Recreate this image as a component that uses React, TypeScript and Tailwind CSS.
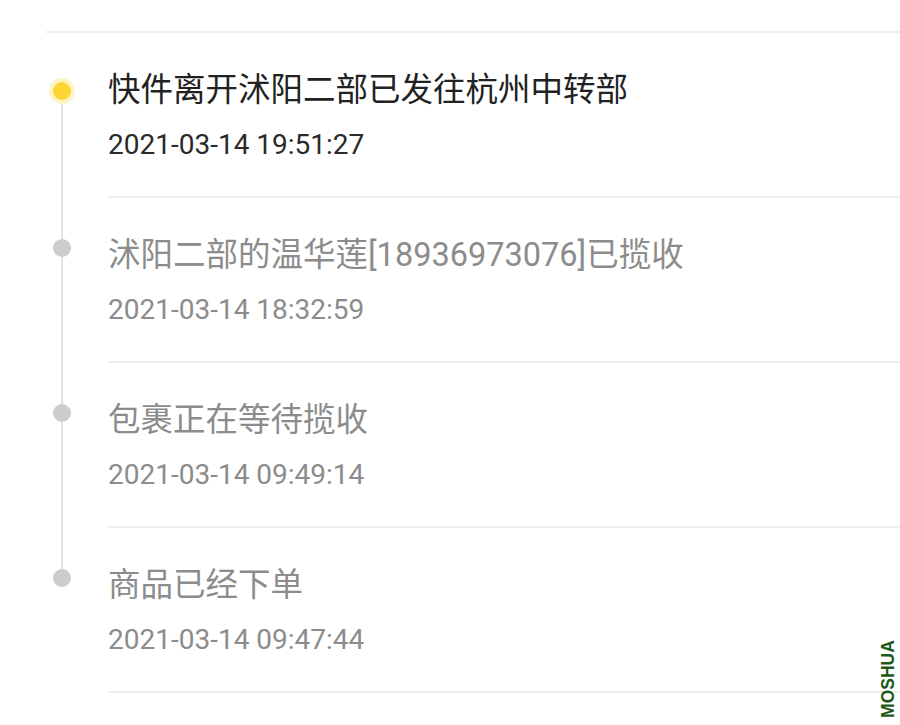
const events = [
  { title: "快件离开沭阳二部已发往杭州中转部", time: "2021-03-14 19:51:27" },
  { title: "沭阳二部的温华莲[18936973076]已揽收", time: "2021-03-14 18:32:59" },
  { title: "包裹正在等待揽收", time: "2021-03-14 09:49:14" },
  { title: "商品已经下单", time: "2021-03-14 09:47:44" },
];

export default function App() {
  return (
    <main
      className="relative w-[900px] h-[725px] overflow-hidden bg-white"
      style={{ fontFamily: 'Roboto, "Noto Sans CJK SC", sans-serif' }}
    >
      <div className="pt-[31px] pl-[46px]">
        <div className="h-[2px] bg-[#eeeeee]" />
      </div>

      <ul>
        {events.map((ev, i) => {
          const first = i === 0;
          const last = i === events.length - 1;
          return (
            <li key={ev.time} className="flex">
              {/* timeline column */}
              <div className="w-[108px] shrink-0 pl-[49px]">
                <div className="w-[26px] h-full flex flex-col items-center">
                  {first ? (
                    <>
                      <div className="h-[45px]" />
                      <div className="w-[26px] h-[26px] rounded-full bg-[#fdf3c4] flex items-center justify-center">
                        <div className="w-[18px] h-[18px] rounded-full bg-[#fdd535]" />
                      </div>
                    </>
                  ) : (
                    <>
                      <div className="h-[41px] w-[2px] bg-[#e2e2e2]" />
                      <div className="w-[18px] h-[18px] rounded-full bg-[#cccccc]" />
                    </>
                  )}
                  <div className={`flex-1 w-[2px] ${last ? "" : "bg-[#e2e2e2]"}`} />
                </div>
              </div>

              {/* content */}
              <div className="flex-1 pt-[37px] pb-[33px] border-b-2 border-[#eeeeee]">
                <p
                  className={`text-[32.5px] leading-[40px] whitespace-nowrap ${
                    first ? "text-[#222222]" : "text-[#8c8c8c]"
                  }`}
                >
                  {ev.title}
                </p>
                <p
                  className={`mt-[17px] text-[28px] leading-[36px] ${
                    first ? "text-[#2a2a2a]" : "text-[#8c8c8c]"
                  }`}
                >
                  {ev.time}
                </p>
              </div>
            </li>
          );
        })}
      </ul>

      {/* watermark */}
      <div
        className="absolute left-[849px] top-[670px] w-[78px] text-center -rotate-90 text-[17.5px] leading-[18px] font-bold text-[#1d5a1a]"
        style={{ fontFamily: '"Liberation Sans", Arial, sans-serif' }}
      >
        MOSHUA
      </div>
    </main>
  );
}
